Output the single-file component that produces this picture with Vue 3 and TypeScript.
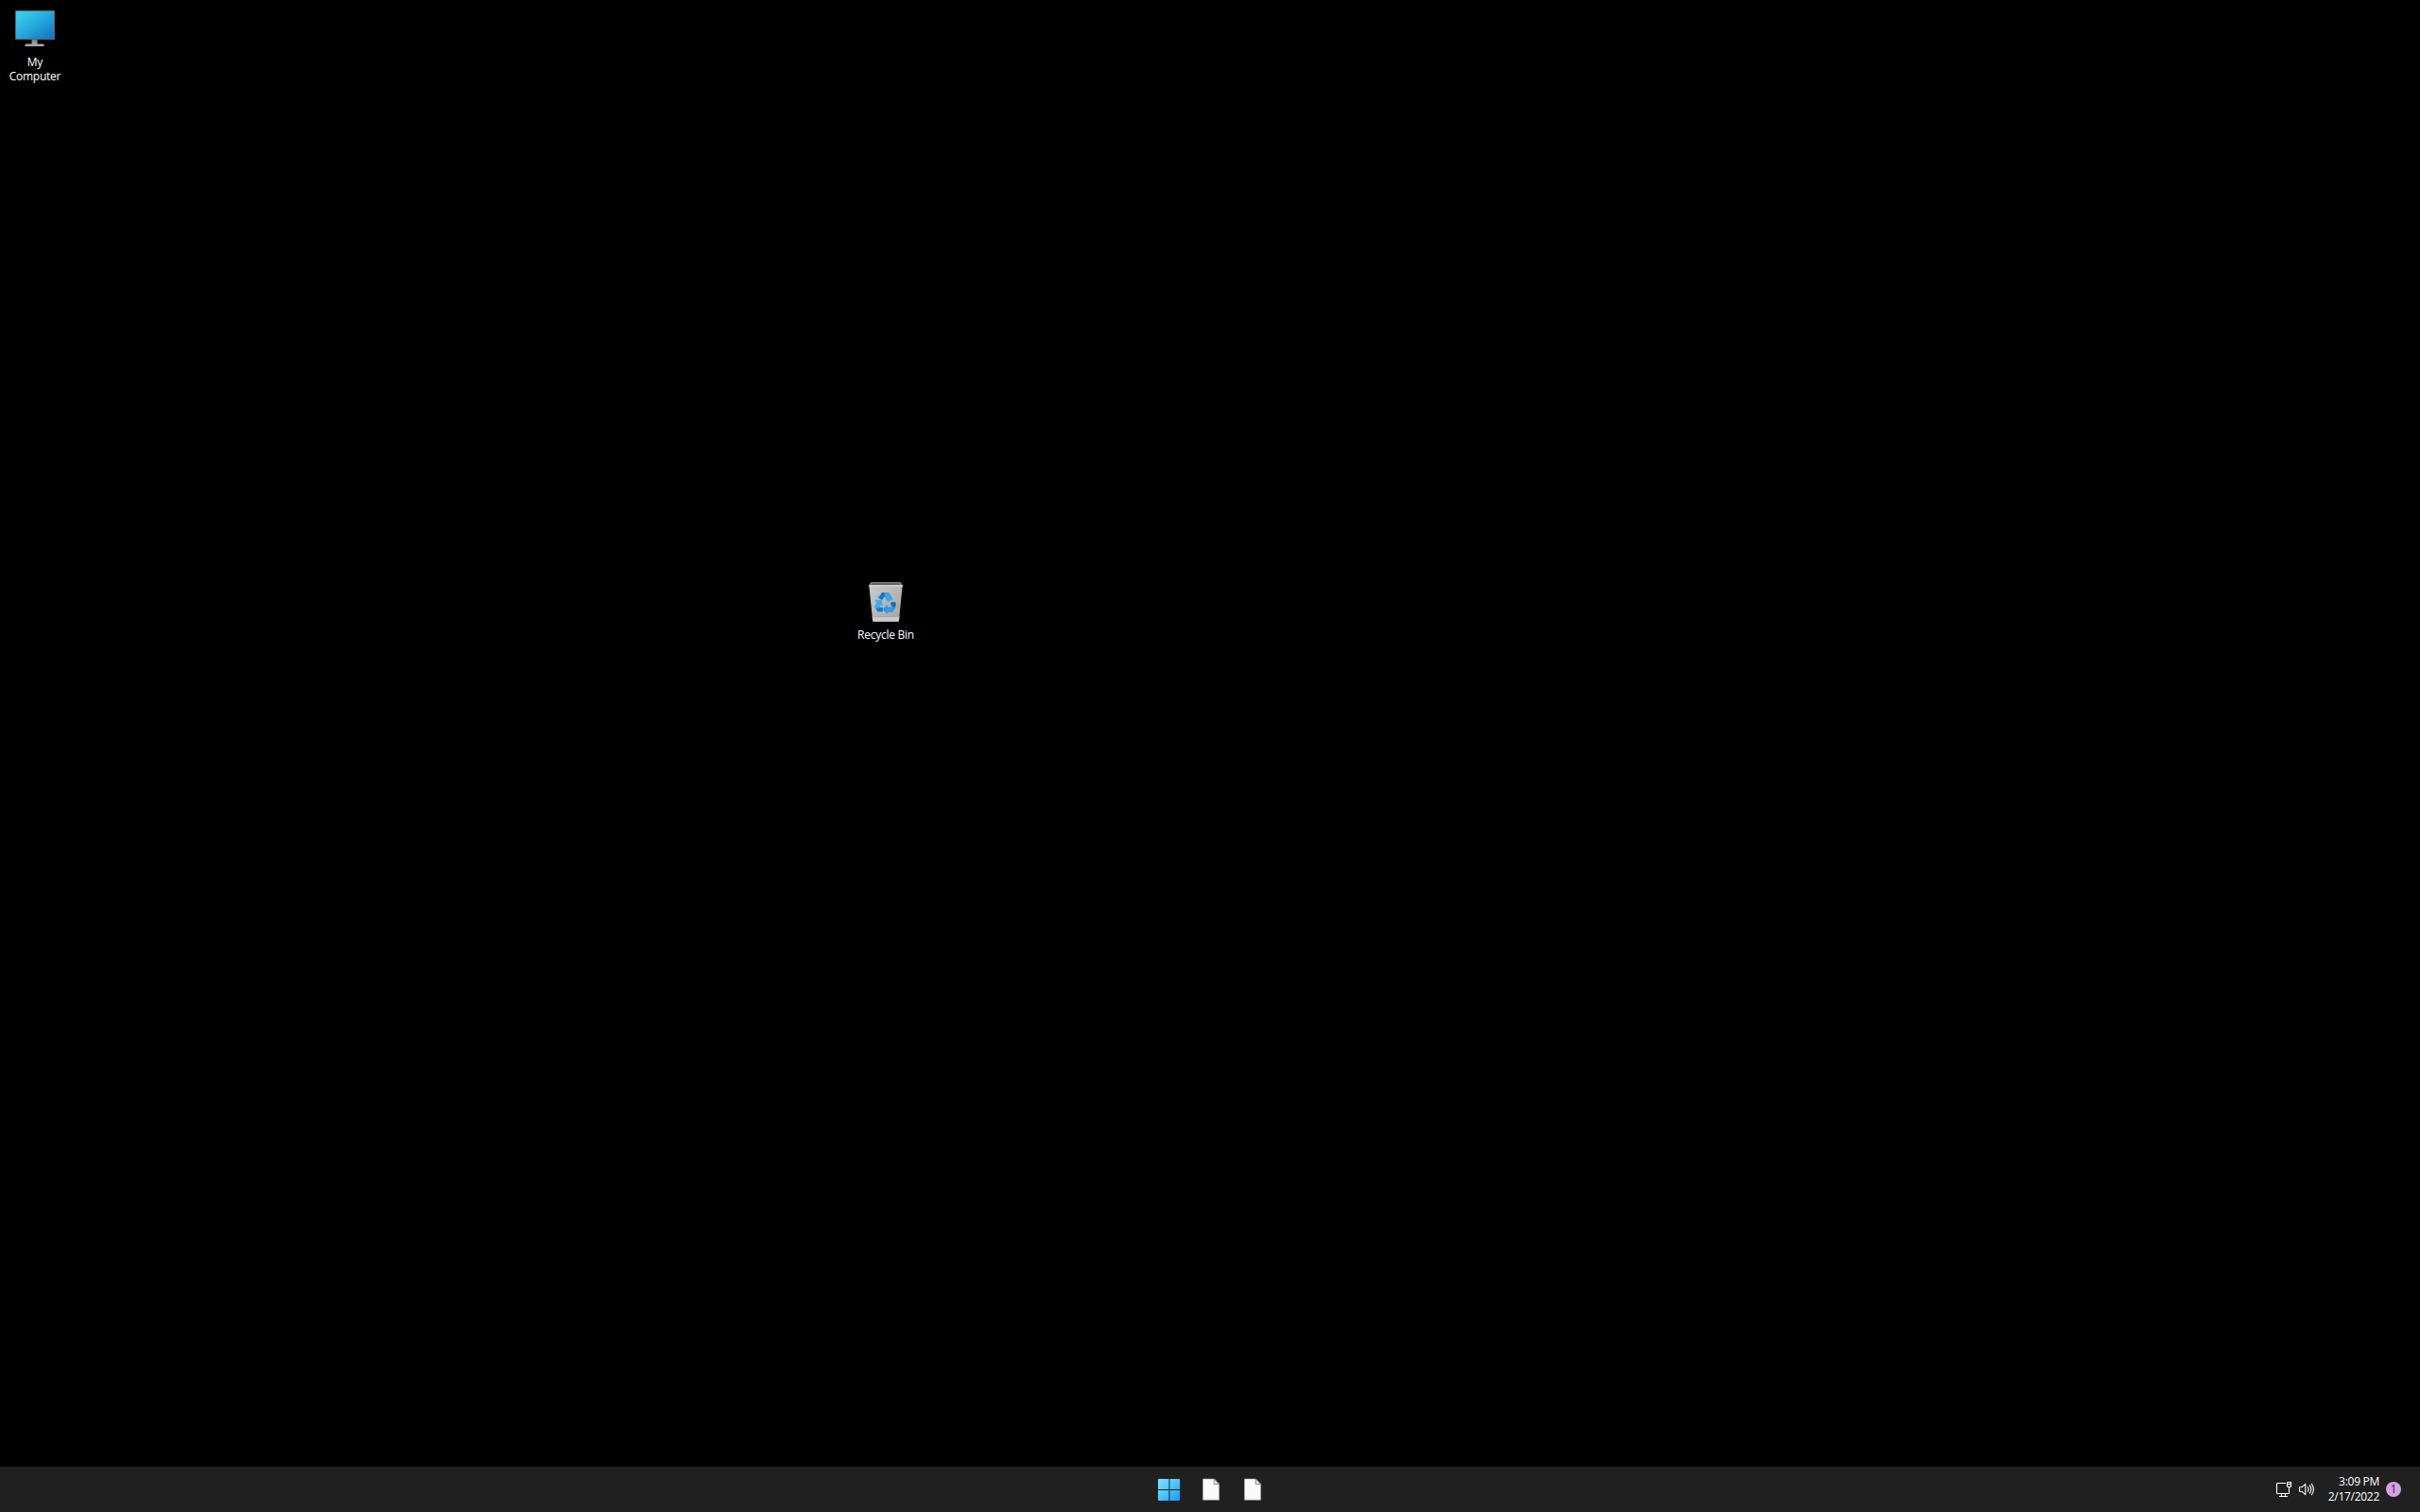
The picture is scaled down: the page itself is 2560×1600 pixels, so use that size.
<script setup lang="ts">
interface TaskFile { id: number; name: string }

const files: TaskFile[] = [
  { id: 1, name: 'first' },
  { id: 2, name: 'second' },
]
const time = '3:09 PM'
const date = '2/17/2022'
const notifications = 1
</script>

<template>
  <div class="desktop">
    <main class="surface">
      <div class="shortcut computer">
        <svg class="glyph" width="48" height="48" viewBox="0 0 48 48">
          <defs>
            <linearGradient id="screen" x1="0" y1="0" x2="1" y2="1">
              <stop offset="0" stop-color="#3ad6ee" />
              <stop offset="0.5" stop-color="#25a9dd" />
              <stop offset="1" stop-color="#1270bc" />
            </linearGradient>
            <linearGradient id="neck" x1="0" y1="0" x2="0" y2="1">
              <stop offset="0" stop-color="#6c7276" />
              <stop offset="1" stop-color="#a9adb0" />
            </linearGradient>
          </defs>
          <path d="M20.500 34h6v6h-6z" fill="url(#neck)" />
          <path d="M14.500 39.500h18q1 0 1 1v1.500h-20v-1.500q0-1 1-1z" fill="#aaa6a5" />
          <rect x="3" y="4" width="42" height="31" rx="1" fill="#4c6875" />
          <rect x="4" y="5" width="40" height="29" rx=".4" fill="url(#screen)" />
        </svg>
        <span class="label">My<br>Computer</span>
      </div>

      <div class="shortcut bin">
        <svg class="glyph" width="48" height="48" viewBox="0 0 48 48">
          <defs>
            <linearGradient id="body" x1="0" y1="0" x2="1" y2="1">
              <stop offset="0" stop-color="#cacaca" />
              <stop offset="0.55" stop-color="#b4b5b6" />
              <stop offset="1" stop-color="#a2a2a3" />
            </linearGradient>
          </defs>
          <path d="M8.500 3h31l2.300 3-.5 2H6.700l-.4-2z" fill="#858585" />
          <path d="M9.500 4h29l1.500 2.500H8z" fill="#626262" />
          <path d="M6.300 6.500h35.400L38 43.500q-.1 1.300-1.400 1.300H11.500q-1.300 0-1.400-1.300z" fill="url(#body)" />
          <path d="M6.300 6h35.400l-.1 1.500H6.400z" fill="#d4d4d4" />
          <path d="M9.700 39h28.700l-.4 4.500q-.1 1.300-1.400 1.300H11.500q-1.300 0-1.400-1.300z" fill="#cbcaca" />
          <path d="M9.700 39h28.700v1H9.800z" fill="#aaa9a9" />
          <g transform="translate(0 -.7)">
            <path d="M20 14.600h7.300l4.500 7.100-5.500 3-3.600-5.300-2.500 3.700-5-3.200z" fill="#3aa3ea" />
            <path d="M20 14.600h2.800l-.2 4.300-2.400 3.200-3.200-1.500z" fill="#1f6fae" />
            <path d="M30 25.300l4.800 1.800-.4 3.500-3.100 4.800h-5.500v2.300l-5.200-5.300 5.200-5v2.600h4.200z" fill="#2f9ae5" />
            <path d="M29 25.100l5.400-.5.300 3.700-1.900 1.800-3.300-2z" fill="#236aa3" />
            <path d="M12.400 22.200l7 .5 1.700 6-2.200-.8-1.200 2.200 3.200-.1v5.400h-5.300l-3.700-5.500 2.300-4.200z" fill="#42abed" />
            <path d="M14.300 31.200l3.400-.6 3.200.2v4h-5.100l-2-2.300z" fill="#2878b7" />
          </g>
        </svg>
        <span class="label">Recycle Bin</span>
      </div>
    </main>

    <footer class="taskbar">
      <div class="side"></div>
      <nav class="apps">
        <button class="app" aria-label="Start">
          <svg width="24" height="24" viewBox="0 0 24 24">
            <defs>
              <linearGradient id="start" gradientUnits="userSpaceOnUse" x1="0" y1="0" x2="24" y2="24">
                <stop offset="0" stop-color="#80e5ff" />
                <stop offset="0.5" stop-color="#4cc6fc" />
                <stop offset="1" stop-color="#1595fa" />
              </linearGradient>
            </defs>
            <path d="M1 1h10.500V12H0V2q0-1 1-1zM12.500 1H22.500q.7 0 .7 1v10H12.500zM0 13h11.500V24H1q-1 0-1-1zM12.500 13h10.700v10q0 1-.7 1h-10z" fill="url(#start)" />
          </svg>
        </button>
        <button v-for="file in files" :key="file.id" class="app" :aria-label="file.name">
          <svg width="24" height="24" viewBox="0 0 24 24">
            <path d="M3.500 1h12l5.200 5.300v17H3.500z" fill="#fafafa" stroke="#a0a0a0" stroke-width=".6" />
            <path d="M15.300 1v5.500h5.300z" fill="#e8e8e8" stroke="#777" stroke-width=".8" />
          </svg>
        </button>
      </nav>
      <div class="side tray">
        <svg class="network" width="18" height="18" viewBox="0 0 18 18">
          <g fill="none" stroke="#fff" stroke-width="1.100">
            <path d="M11 2.500H2.300q-.8 0-.8.800v9.400q0 .8.800.8h11.400q.8 0 .8-.8V7" />
            <path d="M6.500 13.500v3M10.500 13.500v3M4 16.500h9M12.500 1.500h4v4q0 1-1 1h-2q-1 0-1-1zM12.500 3.500h4" />
          </g>
        </svg>
        <svg class="sound" width="18" height="18" viewBox="0 0 18 18">
          <g fill="none" stroke="#fff" stroke-width="1.100" stroke-linecap="round" stroke-linejoin="round">
            <path d="M1.500 6.700h2.700l3.600-3.400v11.400l-3.600-3.400H1.500z" />
            <path d="M10.300 6.700q1.600 2.300 0 4.600M12.400 4.900q2.800 4.100 0 8.200M14.400 3.200q4 5.800 0 11.600" />
          </g>
        </svg>
        <div class="clock"><span class="time">{{ time }}</span><span class="date">{{ date }}</span></div>
        <span class="badge">{{ notifications }}</span>
      </div>
    </footer>
  </div>
</template>

<style>
body { margin: 0; background: #000; }
</style>

<style scoped>
.desktop {
  display: flex;
  flex-direction: column;
  width: 100vw;
  height: 100vh;
  overflow: hidden;
  background: #000;
  color: #fff;
  font: 12px/15px "Open Sans", "Noto Sans", sans-serif;
}
.surface { position: relative; flex: 1; }
.shortcut {
  position: absolute;
  display: flex;
  flex-direction: column;
  align-items: center;
  width: 74px;
  text-align: center;
}
.computer { left: 0; top: 7px; }
.bin { left: 900px; top: 613px; }
.glyph { display: block; }
.label { margin-top: 3px; white-space: nowrap; letter-spacing: -.25px; }
.taskbar { display: flex; height: 48px; background: #202020; }
.side { flex: 1; }
.apps { display: flex; position: relative; left: 1px; }
.app {
  display: grid;
  place-items: center;
  width: 44px;
  height: 48px;
  padding: 0;
  border: 0;
  background: none;
}
.tray { display: flex; align-items: center; justify-content: flex-end; }
.network { margin-right: 6px; }
.sound { margin-right: 14px; }
.clock {
  display: flex;
  flex-direction: column;
  align-items: flex-end;
  width: 54px;
  line-height: 16px;
  letter-spacing: -.28px;
  white-space: nowrap;
}
.badge {
  width: 16px;
  height: 16px;
  margin: 0 20px 0 7px;
  border-radius: 50%;
  background: #d9a0e6;
  color: #38243c;
  font-size: 12px;
  line-height: 16px;
  text-align: center;
}
</style>
